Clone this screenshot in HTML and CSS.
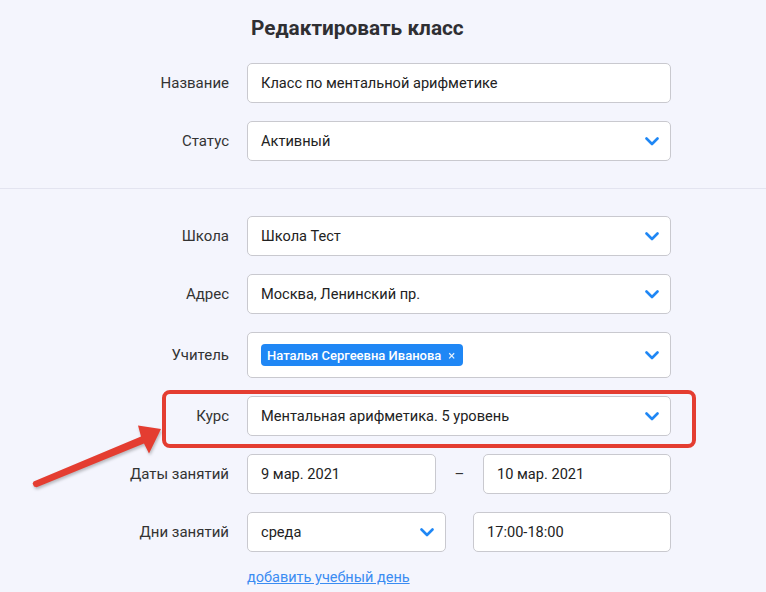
FILE: index.html
```html
<!DOCTYPE html>
<html lang="ru">
<head>
<meta charset="utf-8">
<title>Редактировать класс</title>
<link rel="stylesheet" href="styles.css">
</head>
<body>
<div class="page">
  <h1 class="title">Редактировать класс</h1>

  <section class="group">
    <div class="row">
      <label class="label">Название</label>
      <div class="field"><span class="value">Класс по ментальной арифметике</span></div>
    </div>
    <div class="row">
      <label class="label">Статус</label>
      <div class="field select"><span class="value">Активный</span>
        <svg class="chev" viewBox="0 0 14 9"><polyline points="1.5,1.5 7,7 12.5,1.5"/></svg></div>
    </div>
  </section>

  <hr class="divider">

  <section class="group">
    <div class="row">
      <label class="label">Школа</label>
      <div class="field select"><span class="value">Школа Тест</span>
        <svg class="chev" viewBox="0 0 14 9"><polyline points="1.5,1.5 7,7 12.5,1.5"/></svg></div>
    </div>
    <div class="row">
      <label class="label">Адрес</label>
      <div class="field select"><span class="value">Москва, Ленинский пр.</span>
        <svg class="chev" viewBox="0 0 14 9"><polyline points="1.5,1.5 7,7 12.5,1.5"/></svg></div>
    </div>
    <div class="row">
      <label class="label">Учитель</label>
      <div class="field select tall">
        <span class="chip">Наталья Сергеевна Иванова <span class="chip-x">×</span></span>
        <svg class="chev" viewBox="0 0 14 9"><polyline points="1.5,1.5 7,7 12.5,1.5"/></svg></div>
    </div>
    <div class="row highlighted">
      <label class="label">Курс</label>
      <div class="field select"><span class="value">Ментальная арифметика. 5 уровень</span>
        <svg class="chev" viewBox="0 0 14 9"><polyline points="1.5,1.5 7,7 12.5,1.5"/></svg></div>
      <div class="mark"></div>
      <svg class="arrow" viewBox="0 0 140 72">
        <polygon points="5.6,60.4 113,15.4 110,4.5 133,8 121,32.5 116,22.6 8.6,66.2 6,65.4 4.6,62.6"/>
      </svg>
    </div>
    <div class="row">
      <label class="label">Даты занятий</label>
      <div class="pair dates">
        <div class="field"><span class="value">9 мар. 2021</span></div>
        <span class="dash">–</span>
        <div class="field"><span class="value">10 мар. 2021</span></div>
      </div>
    </div>
    <div class="row">
      <label class="label">Дни занятий</label>
      <div class="pair days">
        <div class="field select"><span class="value">среда</span>
          <svg class="chev" viewBox="0 0 14 9"><polyline points="1.5,1.5 7,7 12.5,1.5"/></svg></div>
        <div class="field"><span class="value">17:00-18:00</span></div>
      </div>
    </div>
    <div class="row link-row">
      <span></span>
      <a class="add-link" href="#">добавить учебный день</a>
    </div>
  </section>
</div>
</body>
</html>
```

FILE: styles.css
```css
* { box-sizing: border-box; }

html, body {
  margin: 0;
  padding: 0;
  background: #f4f5fd;
  font-family: "Roboto", "Liberation Sans", sans-serif;
  color: #333;
}

.page {
  width: 766px;
  height: 592px;
  overflow: hidden;
  padding-top: 14px;
}

.title {
  margin: 0 0 0 251px;
  font-size: 20.8px;
  font-weight: 700;
  line-height: 28px;
  color: #2f2f33;
}

.group {
  display: flex;
  flex-direction: column;
  gap: 18px;
}

.group:first-of-type { margin-top: 21px; }

.divider {
  border: 0;
  border-top: 1px solid #e3e4f0;
  margin: 27px 0 27px;
}

.row {
  position: relative;
  display: grid;
  grid-template-columns: 229px 424px;
  column-gap: 18px;
  align-items: center;
}

.label {
  text-align: right;
  font-size: 15px;
  color: #333;
}

.field {
  height: 40px;
  background: #fff;
  border: 1px solid #c9c9cf;
  border-radius: 5px;
  padding: 0 11px 0 13px;
  display: flex;
  align-items: center;
  justify-content: space-between;
  font-size: 14.6px;
  color: #222;
}

.field.tall { height: 46px; }

.chev {
  width: 14px;
  height: 9px;
  fill: none;
  stroke: #1f87f5;
  stroke-width: 2.6;
  stroke-linecap: round;
  stroke-linejoin: round;
}

.chip {
  display: inline-flex;
  align-items: center;
  height: 22px;
  padding: 0 8px 0 6px;
  background: #1f87f5;
  color: #fff;
  border-radius: 4px;
  font-size: 13px;
  font-weight: 500;
}

.chip-x {
  margin-left: 7px;
  font-size: 13px;
  font-weight: 400;
  opacity: 0.9;
}

.pair {
  display: grid;
  align-items: center;
}

.dates { grid-template-columns: 189px 47px 188px; }

.dash {
  text-align: center;
  font-size: 15px;
  color: #333;
}

.days {
  grid-template-columns: 199px 198px;
  column-gap: 27px;
}

.link-row { margin-top: -1px; }

.add-link {
  font-size: 14.5px;
  color: #3b8cf2;
  text-decoration: underline;
  line-height: 18px;
}

/* red frame drawn over the course row */
.mark {
  position: absolute;
  left: 162px;
  top: -6px;
  width: 534px;
  height: 58px;
  border: 4px solid #e43d31;
  border-radius: 8px;
  pointer-events: none;
}

.arrow {
  position: absolute;
  left: 28px;
  top: 25px;
  width: 140px;
  height: 72px;
  fill: #e43d31;
  filter: drop-shadow(1px 2px 1.5px rgba(0, 0, 0, 0.25));
}
```
